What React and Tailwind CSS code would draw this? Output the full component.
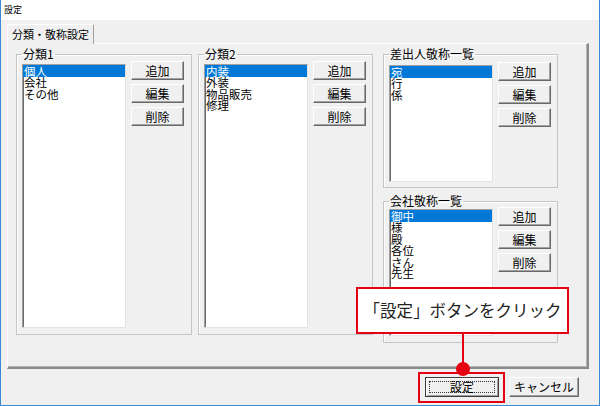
import React from "react";

function ListBox({ items, className }) {
  return (
    <div className={className}>
      {items.map((t, i) => (
        <div
          key={t}
          className={
            i === 0
              ? "h-[12px] leading-[12px] pl-[1px] bg-[#0078d7] text-white whitespace-nowrap"
              : "h-[11.6px] leading-[11.6px] pl-[1px] text-black whitespace-nowrap"
          }
        >
          {t}
        </div>
      ))}
    </div>
  );
}

function Btn({ children }) {
  return (
    <div className="w-[53px] h-[19px] flex items-center justify-center bg-[#f0f0f0] border border-t-white border-l-white border-r-[#696969] border-b-[#696969] shadow-[inset_-1px_-1px_0_#a0a0a0] text-[12px] leading-none text-black">
      {children}
    </div>
  );
}

function Buttons({ className }) {
  return (
    <div className={className}>
      <Btn>追加</Btn>
      <Btn>編集</Btn>
      <Btn>削除</Btn>
    </div>
  );
}

const listCls1 =
  "mt-[4px] w-[104px] h-[264px] bg-white border border-t-[#a0a0a0] border-l-[#a0a0a0] border-r-[#e3e3e3] border-b-[#e3e3e3] shadow-[inset_1px_1px_0_#696969] text-[11.5px]";
const listCls3 =
  "mt-[5px] w-[104px] h-[117px] bg-white border border-t-[#a0a0a0] border-l-[#a0a0a0] border-r-[#e3e3e3] border-b-[#e3e3e3] shadow-[inset_1px_1px_0_#696969] text-[11.5px]";
const listCls4 =
  "mt-[2px] w-[104px] h-[127px] bg-white border border-t-[#a0a0a0] border-l-[#a0a0a0] border-r-[#e3e3e3] border-b-[#e3e3e3] shadow-[inset_1px_1px_0_#696969] text-[11.5px]";

export default function App() {
  return (
    <div className="relative w-[600px] h-[406px] bg-[#f0f0f0] border-l border-r border-b border-[#3b8ad6] font-['Noto_Sans_CJK_JP','Noto_Sans',sans-serif] text-black overflow-hidden">
      {/* title bar */}
      <div className="h-[20px] bg-white pl-[3px] pt-[5px] text-[9px] leading-none">設定</div>

      {/* tab header */}
      <div className="relative z-10 ml-[6px] mt-[4px] -mb-[1px] w-[87px] h-[20px] bg-[#f0f0f0] border-t border-l border-r border-t-white border-l-white border-r-[#a0a0a0] pl-[4px] pt-[3px] text-[11px] leading-[12px] whitespace-nowrap">
        分類・敬称設定
      </div>

      {/* tab panel */}
      <div className="ml-[6px] w-[582px] h-[326px] border border-t-white border-l-white border-r-2 border-b-2 border-r-[#8a8a8a] border-b-[#8a8a8a] shadow-[inset_-1px_-1px_0_#b4b4b4] pl-[8px] pt-[4px] flex items-start">
        {/* group 1 */}
        <fieldset className="w-[176px] border border-[#c4c4c4] shadow-[inset_1px_1px_0_#fff] px-[5px] pb-[6px] flex items-start gap-[5px]">
          <legend className="px-[1px] text-[12px] leading-[12px]">分類1</legend>
          <ListBox items={["個人", "会社", "その他"]} className={listCls1} />
          <Buttons className="mt-[1px] flex flex-col gap-[4px]" />
        </fieldset>

        {/* group 2 */}
        <fieldset className="ml-[6px] w-[175px] border border-[#c4c4c4] shadow-[inset_1px_1px_0_#fff] px-[5px] pb-[6px] flex items-start gap-[5px]">
          <legend className="px-[1px] text-[12px] leading-[12px]">分類2</legend>
          <ListBox items={["内装", "外装", "物品販売", "修理"]} className={listCls1} />
          <Buttons className="mt-[1px] flex flex-col gap-[4px]" />
        </fieldset>

        {/* right column */}
        <div className="ml-[10px] w-[175px] flex flex-col gap-[7px]">
          <fieldset className="w-[175px] border border-[#c4c4c4] shadow-[inset_1px_1px_0_#fff] px-[5px] pb-[5px] flex items-start gap-[5px]">
            <legend className="px-[1px] text-[12px] leading-[12px]">差出人敬称一覧</legend>
            <ListBox items={["宛", "行", "係"]} className={listCls3} />
            <Buttons className="mt-[2px] flex flex-col gap-[4px]" />
          </fieldset>
          <fieldset className="w-[175px] border border-[#c4c4c4] shadow-[inset_1px_1px_0_#fff] px-[5px] pb-[6px] flex items-start gap-[5px]">
            <legend className="px-[1px] text-[12px] leading-[12px]">会社敬称一覧</legend>
            <ListBox items={["御中", "様", "殿", "各位", "さん", "先生"]} className={listCls4} />
            <Buttons className="mt-[0px] flex flex-col gap-[4px]" />
          </fieldset>
        </div>
      </div>

      {/* bottom buttons */}
      <div className="mt-[8px] pr-[20px] flex justify-end gap-[10px]">
        <div className="w-[74px] h-[20px] bg-[#f0f0f0] border border-[#3c3c3c] shadow-[inset_1px_1px_0_#fff,inset_-1px_-1px_0_#a0a0a0] p-[3px] flex">
          <div className="flex-1 border border-dotted border-[#333] flex items-center justify-center text-[12px] leading-none">
            設定
          </div>
        </div>
        <div className="w-[70px] h-[20px] bg-[#f0f0f0] border border-t-white border-l-white border-r-[#696969] border-b-[#696969] shadow-[inset_-1px_-1px_0_#a0a0a0] flex items-center justify-center text-[12px] leading-none whitespace-nowrap">
          キャンセル
        </div>
      </div>

      {/* callout overlay */}
      <div className="absolute left-[355px] top-[287px] w-[213px] h-[47px] bg-white border-2 border-[#e50012] flex items-center justify-center text-[16.5px] leading-none whitespace-nowrap text-[#222]">
        「設定」ボタンをクリック
      </div>
      <div className="absolute left-[461px] top-[333px] w-[2px] h-[36px] bg-[#e50012]" />
      <div className="absolute left-[455px] top-[362px] w-[14px] h-[14px] rounded-full bg-[#e50012]" />
      <div className="absolute left-[417px] top-[372px] w-[87px] h-[31px] border-2 border-[#e50012]" />
    </div>
  );
}
